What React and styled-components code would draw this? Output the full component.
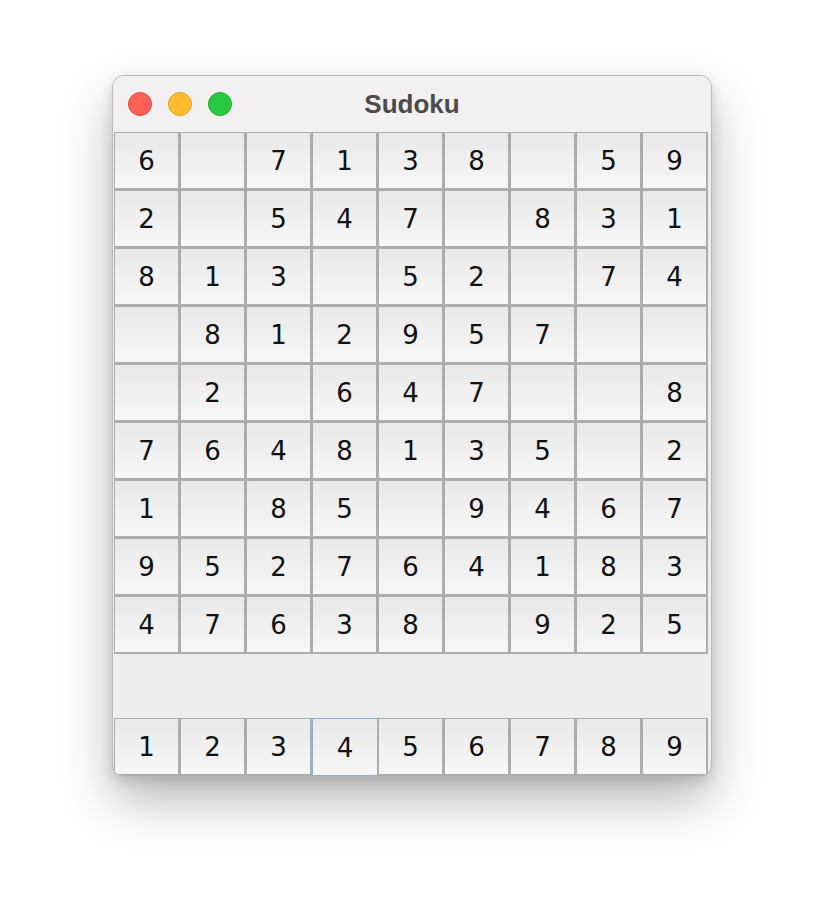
import React, { useState } from 'react';
import styled, { createGlobalStyle } from 'styled-components';

const GlobalStyle = createGlobalStyle`
  html, body {
    margin: 0;
    padding: 0;
    background: #ffffff;
  }
  body {
    font-family: "DejaVu Sans", "Liberation Sans", sans-serif;
  }
`;

const Page = styled.div`
  display: flex;
  justify-content: center;
  align-items: flex-start;
  padding-top: 75px;
  min-height: 924px;
  box-sizing: border-box;
`;

const Window = styled.div`
  width: 600px;
  box-sizing: border-box;
  border: 1px solid #b9b9b9;
  border-radius: 12px;
  overflow: hidden;
  background: #eeeeee;
  box-shadow: 0 24px 50px rgba(0, 0, 0, 0.28), 0 4px 12px rgba(0, 0, 0, 0.12);
  display: flex;
  flex-direction: column;
`;

const TitleBar = styled.div`
  position: relative;
  height: 56px;
  background: #f2f0f1;
  display: flex;
  align-items: center;
  justify-content: center;
`;

const Lights = styled.div`
  position: absolute;
  left: 15px;
  top: 16px;
  display: flex;
  gap: 16px;
`;

const Light = styled.span`
  width: 24px;
  height: 24px;
  box-sizing: border-box;
  border-radius: 50%;
  background: ${p => p.$fill};
  border: 1px solid ${p => p.$edge};
`;

const Title = styled.div`
  font-family: "Liberation Sans", Arial, sans-serif;
  font-weight: bold;
  font-size: 26px;
  color: #4b4b4b;
  margin-top: 1px;
`;

const Body = styled.div`
  display: flex;
  flex-direction: column;
  padding: 0 3px 0 1px;
`;

const Grid = styled.div`
  display: grid;
  grid-template-columns: repeat(9, 66px);
  grid-auto-rows: 58px;
`;

const Cell = styled.div`
  box-sizing: border-box;
  display: flex;
  align-items: center;
  justify-content: center;
  border-style: solid;
  border-color: ${p => (p.$selected ? '#8db1de' : '#adadad')};
  border-width: ${p => (p.$selected ? '1px' : '1px 2px 2px 1px')};
  background: linear-gradient(to bottom, #e9e9e9, #f7f7f7);
  font-family: "DejaVu Sans", sans-serif;
  font-size: 26px;
  color: #111111;
  padding-top: 1px;
  cursor: default;
  user-select: none;
`;

const Spacer = styled.div`
  height: 64px;
`;

const puzzle = [
  '6.7138.59',
  '2.547.831',
  '813.52.74',
  '.812957..',
  '.2.647..8',
  '7648135.2',
  '1.85.9467',
  '952764183',
  '47638.925',
];

export default function App() {
  const [picked, setPicked] = useState(4);

  return (
    <>
      <GlobalStyle />
      <Page>
        <Window>
          <TitleBar>
            <Lights>
              <Light $fill="#fe5f57" $edge="#e2463f" />
              <Light $fill="#febc2e" $edge="#e0a127" />
              <Light $fill="#28c840" $edge="#1eac2f" />
            </Lights>
            <Title>Sudoku</Title>
          </TitleBar>
          <Body>
            <Grid>
              {puzzle.map((row, r) =>
                row.split('').map((ch, c) => (
                  <Cell key={`${r}-${c}`}>{ch === '.' ? '' : ch}</Cell>
                ))
              )}
            </Grid>
            <Spacer />
            <Grid>
              {[1, 2, 3, 4, 5, 6, 7, 8, 9].map(n => (
                <Cell key={n} $selected={n === picked} onClick={() => setPicked(n)}>
                  {n}
                </Cell>
              ))}
            </Grid>
          </Body>
        </Window>
      </Page>
    </>
  );
}
